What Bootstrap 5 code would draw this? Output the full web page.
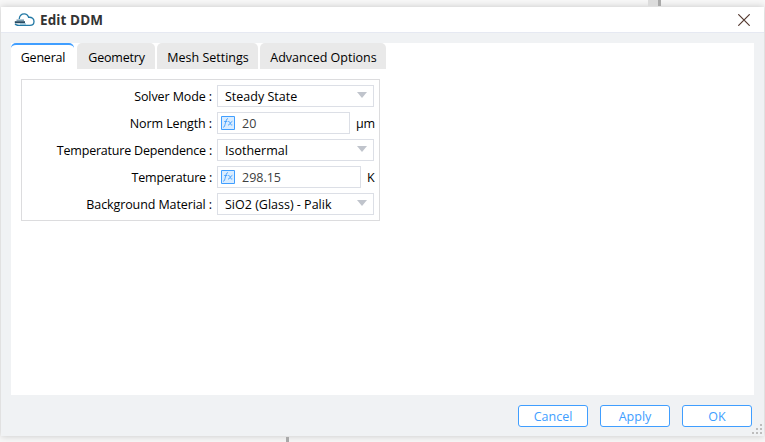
<!DOCTYPE html>
<html lang="en">
<head>
<meta charset="utf-8">
<meta name="viewport" content="width=device-width, initial-scale=1">
<title>Edit DDM</title>
<link href="https://cdn.jsdelivr.net/npm/bootstrap@5.3.0/dist/css/bootstrap.min.css" rel="stylesheet">
<style>
body{width:765px;height:442px;overflow:hidden;background:#f7f7f7;font:12.5px/20px "Open Sans","Noto Sans",sans-serif;color:#000;padding:7px 1px 0}
.dialog{width:763px;height:429px;background:#f0f2f4;box-shadow:0 0 7px rgba(0,0,0,.2)}
.titlebar{height:26px;background:#fff;border-bottom:1px solid #e6e9f2;padding:0 14px 0 13px}
.title-text{font-size:13.5px;font-weight:700;color:#333;margin-left:5px;letter-spacing:.1px}
.panel{margin:10px 10px 0;height:352px;background:#fff}
.tabs{gap:2px;height:26px}
.tabs .nav-link{height:26px;padding:5px 0 0 1px;border:0;border-radius:5px 5px 0 0;background:#e9e9e9;color:#000;text-align:center;font-size:12.5px;line-height:20px;white-space:nowrap}
.tabs .nav-link.active{background:#fff;border-top:2px solid #409eff;padding-top:3px;margin-right:1px}
.tabs .w-gen,.tabs .w-geo{letter-spacing:-.2px}
.w-gen{width:63px}.w-geo{width:78px}.w-mesh{width:101px}.w-adv{width:126px}
.group{width:359px;height:142px;margin:10px 0 0 10px;border:1px solid #dcdcde;padding:5px}
.line{height:22px;margin-bottom:5px}
.line span{padding-top:2px}
.name{flex:none;width:185px;margin-right:5px;white-space:nowrap;text-align:right;letter-spacing:-.1px}
.name.snug{letter-spacing:-.2px}
.field{flex:none;height:22px;border:1px solid #dcdfe6;background:#fff;padding:0 6px 0 7px;white-space:nowrap}
.field.num{padding-left:3px;color:#404040}
.f-full{width:157px}.f-um{width:133px}.f-k{width:144px}
.unit{margin-left:6px;white-space:nowrap;letter-spacing:-.3px}
.fx{margin-right:7px}
.arrow{margin-bottom:2px}
.dlg-btn{width:70px;height:22px;padding:1px 0 0;border:1px solid #409eff;border-radius:3px;background:#fff;color:#409eff;font-size:12.5px;line-height:20px}
.footer-bar{gap:12px;padding:10px 12px 0 0}
.grip{right:3px;bottom:8px}
.stub{height:6px;width:13px;left:648px;top:0;background:#dcdcdc;border-right:3px solid #a9a9a9}
.stub2{height:5px;width:3px;left:286px;bottom:0;background:#a9a9a9}
svg{display:block;flex:none}
</style>
<script src="https://cdn.jsdelivr.net/npm/bootstrap@5.3.0/dist/js/bootstrap.bundle.min.js"></script>
</head>
<body class="position-relative">
<div class="stub position-absolute"></div>
<div class="stub2 position-absolute"></div>
<div class="dialog">
  <div class="titlebar d-flex align-items-center">
    <svg width="21" height="14" viewBox="0 0 21 14" fill="none"><path d="M5.2 6C5.6 2 8 .8 10.3.8 12.7.8 14 2.4 14.6 4.3 18 4 20 6 20 8.5 20 11 18 12.4 15.8 12.4H5C3 12.4 1.6 12 1.2 10.8" stroke="#2379a5" stroke-width="1.3"/><path d="M2.5 7.2H10" stroke="#6d93a8" stroke-width="1.4"/><path d="M.8 9.2H11" stroke="#274b62" stroke-width="2"/><path d="M6 11H12" stroke="#6aaac7"/></svg>
    <span class="title-text">Edit DDM</span>
    <svg class="ms-auto" width="12" height="12" viewBox="0 0 12 12"><path d="M.3.3 11.7 11.7M11.7.3.3 11.7" stroke="#54392f" stroke-width="1.2"/></svg>
  </div>
  <div class="panel">
    <div class="nav tabs flex-nowrap" role="tablist">
      <a class="nav-link active w-gen"><span>General</span></a>
      <a class="nav-link w-geo"><span>Geometry</span></a>
      <a class="nav-link w-mesh"><span>Mesh Settings</span></a>
      <a class="nav-link w-adv"><span>Advanced Options</span></a>
    </div>
    <div class="group">
      <div class="line d-flex align-items-center"><span class="name">Solver Mode :</span><div class="field f-full d-flex align-items-center"><span>Steady State</span><svg class="arrow ms-auto" width="10" height="6"><path d="M0 0H10L5 6Z" fill="#c0c4cc"/></svg></div></div>
      <div class="line d-flex align-items-center"><span class="name">Norm Length :</span><div class="field num f-um d-flex align-items-center"><svg class="fx" width="14" height="14" viewBox="0 0 14 14"><path d="M.5.5H13.5V13.5H.5Z" fill="#d9ecff" stroke="#409eff"/><path d="M2.2 11.3C4.5 11.8 4.2 2.4 7 2.6M3.2 5.5H6.3M7.2 5.5C9.6 4.8 8.7 9.8 11.3 8.9M11.4 5.3C9.7 5.3 9 9.3 7 9.2" fill="none" stroke="#409eff" stroke-width=".9"/></svg><span>20</span></div><span class="unit">μm</span></div>
      <div class="line d-flex align-items-center"><span class="name snug">Temperature Dependence :</span><div class="field f-full d-flex align-items-center"><span>Isothermal</span><svg class="arrow ms-auto" width="10" height="6"><path d="M0 0H10L5 6Z" fill="#c0c4cc"/></svg></div></div>
      <div class="line d-flex align-items-center"><span class="name snug">Temperature :</span><div class="field num f-k d-flex align-items-center"><svg class="fx" width="14" height="14" viewBox="0 0 14 14"><path d="M.5.5H13.5V13.5H.5Z" fill="#d9ecff" stroke="#409eff"/><path d="M2.2 11.3C4.5 11.8 4.2 2.4 7 2.6M3.2 5.5H6.3M7.2 5.5C9.6 4.8 8.7 9.8 11.3 8.9M11.4 5.3C9.7 5.3 9 9.3 7 9.2" fill="none" stroke="#409eff" stroke-width=".9"/></svg><span>298.15</span></div><span class="unit">K</span></div>
      <div class="line d-flex align-items-center"><span class="name">Background Material :</span><div class="field f-full d-flex align-items-center"><span>SiO2 (Glass) - Palik</span><svg class="arrow ms-auto" width="10" height="6"><path d="M0 0H10L5 6Z" fill="#c0c4cc"/></svg></div></div>
    </div>
  </div>
  <div class="footer-bar d-flex justify-content-end">
    <button class="btn dlg-btn">Cancel</button>
    <button class="btn dlg-btn">Apply</button>
    <button class="btn dlg-btn">OK</button>
  </div>
</div>
<svg class="grip position-absolute" width="10" height="10" fill="#bdbdbd"><path d="M8 0h2v2h-2zM4 4h2v2h-2zM8 4h2v2h-2zM0 8h2v2h-2zM4 8h2v2h-2zM8 8h2v2h-2z"/></svg>
</body>
</html>
